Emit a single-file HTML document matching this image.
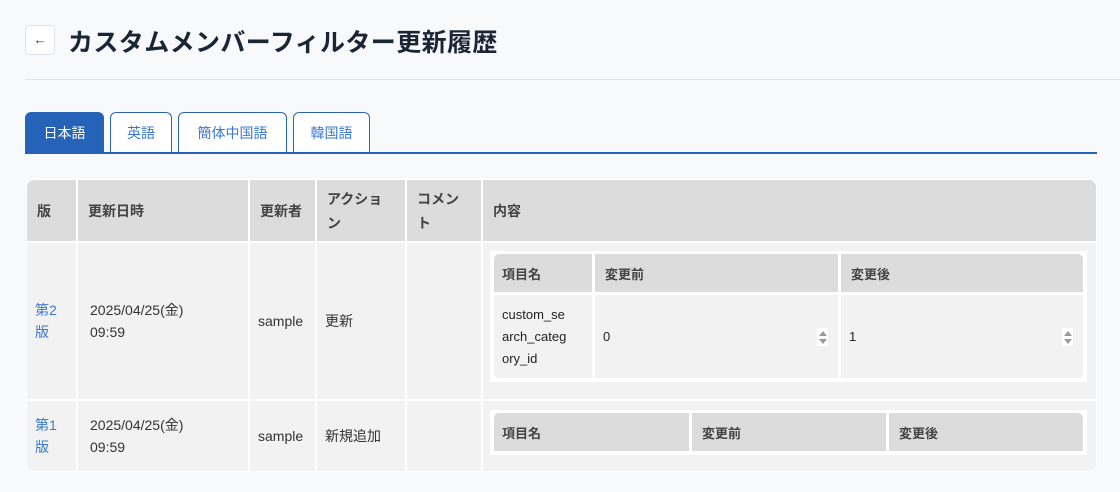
<!DOCTYPE html>
<html><head><meta charset="utf-8"><style>
*{box-sizing:border-box;margin:0;padding:0}
body{width:1120px;height:492px;background:#f8f9fb;font-family:"Liberation Sans","Noto Sans CJK JP",sans-serif;position:relative;overflow:hidden;color:#333}
.a{position:absolute}
.back{left:25px;top:25px;width:30px;height:30px;background:#fff;border:1px solid #dde3ea;border-radius:4px;font-size:13px;color:#333;text-align:center;line-height:27px}
.title{left:68px;top:23px;font-size:25px;font-weight:bold;color:#1a2536;letter-spacing:0.4px}
.tab{top:112px;height:41px;border:1px solid #2b63b5;border-bottom:none;border-radius:6px 6px 0 0;background:#fff;color:#3b78d0;font-size:14px;text-align:center;line-height:40px}
.h{background:#dcdcdc;font-weight:bold;font-size:14px;color:#444;padding:0 10px}
.c{background:#f2f2f2;font-size:14px;padding:0 8px}
.v{display:flex;align-items:center}
.lk{color:#3b78d0}
.spin{width:11px;height:18px;background:#fff}
.spin:before{content:"";position:absolute;left:2px;top:3px;border:4px solid transparent;border-bottom:5px solid #999;border-top:0}
.spin:after{content:"";position:absolute;left:2px;top:11px;border:4px solid transparent;border-top:5px solid #999;border-bottom:0}
</style></head><body>
<div class="a back">←</div>
<div class="a title">カスタムメンバーフィルター更新履歴</div>
<div class="a" style="left:25px;top:79px;width:1095px;height:1px;background:#dde3ea"></div>

<div class="a tab" style="left:25px;width:79px;background:#2463b8;color:#fff">日本語</div>
<div class="a tab" style="left:110px;width:62px">英語</div>
<div class="a tab" style="left:178px;width:109px">簡体中国語</div>
<div class="a tab" style="left:293px;width:77px">韓国語</div>
<div class="a" style="left:25px;top:152px;width:1072px;height:2px;background:#2463b8"></div>

<div class="a" style="left:26px;top:179px;width:1071px;height:293px;background:#fff;border-radius:8px"></div>
<div class="a h v" style="left:27px;top:180px;width:49px;height:61px;border-top-left-radius:7px">版</div>
<div class="a h v" style="left:78px;top:180px;width:170px;height:61px">更新日時</div>
<div class="a h v" style="left:250px;top:180px;width:65px;height:61px">更新者</div>
<div class="a h v" style="left:317px;top:180px;width:88px;height:61px;line-height:24px">アクション</div>
<div class="a h v" style="left:407px;top:180px;width:74px;height:61px;line-height:24px">コメント</div>
<div class="a h v" style="left:483px;top:180px;width:613px;height:61px;border-top-right-radius:7px">内容</div>

<div class="a c v lk" style="left:27px;top:243px;width:49px;height:156px;line-height:22px">第2版</div>
<div class="a c v" style="left:78px;top:243px;width:170px;height:156px;padding-left:12px;line-height:22px">2025/04/25(金)<br>09:59</div>
<div class="a c v" style="left:250px;top:243px;width:65px;height:156px">sample</div>
<div class="a c v" style="left:317px;top:243px;width:88px;height:156px">更新</div>
<div class="a c" style="left:407px;top:243px;width:74px;height:156px"></div>
<div class="a c" style="left:483px;top:243px;width:613px;height:156px"></div>
<div class="a" style="left:490px;top:251px;width:597px;height:131px;background:#fff"></div>
<div class="a h v" style="left:494px;top:254px;width:98px;height:38px;border-top-left-radius:5px;font-size:13px;padding-left:8px">項目名</div>
<div class="a h v" style="left:595px;top:254px;width:243px;height:38px;font-size:13px">変更前</div>
<div class="a h v" style="left:841px;top:254px;width:242px;height:38px;border-top-right-radius:5px;font-size:13px">変更後</div>
<div class="a c v" style="left:494px;top:295px;width:98px;height:83px;font-size:13px;color:#222;border-bottom-left-radius:5px"><span style="display:block;line-height:22px">custom_se<br>arch_categ<br>ory_id</span></div>
<div class="a c v" style="left:595px;top:295px;width:243px;height:83px;font-size:13px;color:#222">0</div>
<div class="a spin" style="left:817px;top:328px"></div>
<div class="a c v" style="left:841px;top:295px;width:242px;height:83px;font-size:13px;color:#222;border-bottom-right-radius:5px">1</div>
<div class="a spin" style="left:1062px;top:328px"></div>

<div class="a c v lk" style="left:27px;top:401px;width:49px;height:70px;line-height:22px;border-bottom-left-radius:7px">第1版</div>
<div class="a c v" style="left:78px;top:401px;width:170px;height:70px;padding-left:12px;line-height:22px">2025/04/25(金)<br>09:59</div>
<div class="a c v" style="left:250px;top:401px;width:65px;height:70px">sample</div>
<div class="a c v" style="left:317px;top:401px;width:88px;height:70px">新規追加</div>
<div class="a c" style="left:407px;top:401px;width:74px;height:70px"></div>
<div class="a c" style="left:483px;top:401px;width:613px;height:70px;border-bottom-right-radius:7px"></div>
<div class="a" style="left:490px;top:410px;width:597px;height:45px;background:#fff"></div>
<div class="a h v" style="left:494px;top:413px;width:195px;height:38px;border-top-left-radius:5px;font-size:13px;padding-left:8px">項目名</div>
<div class="a h v" style="left:692px;top:413px;width:194px;height:38px;font-size:13px">変更前</div>
<div class="a h v" style="left:889px;top:413px;width:194px;height:38px;border-top-right-radius:5px;font-size:13px">変更後</div>
</body></html>
